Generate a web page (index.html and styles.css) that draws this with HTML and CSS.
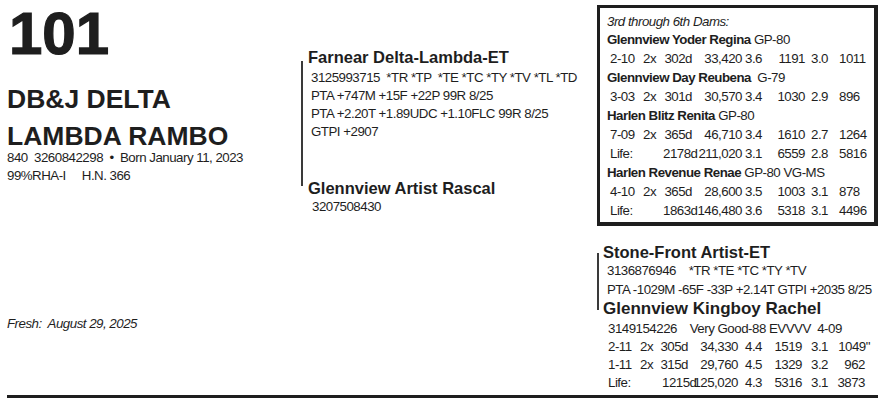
FILE: index.html
```html
<!DOCTYPE html>
<html>
<head>
<meta charset="utf-8">
<link rel="stylesheet" href="styles.css">
</head>
<body>
<div class="sheet">
  <section class="animal">
    <div class="lot">101</div>
    <h1 class="name">DB&amp;J DELTA<br>LAMBDA RAMBO</h1>
    <p class="meta">840  3260842298  •  Born January 11, 2023</p>
    <p class="meta">99%RHA-I     H.N. 366</p>
    <p class="fresh">Fresh:  August 29, 2025</p>
  </section>

  <section class="parents">
    <div class="pair pair-parents">
      <h2 class="hd">Farnear Delta-Lambda-ET</h2>
      <div class="data data-sire">
        <p>3125993715  *TR *TP  *TE *TC *TY *TV *TL *TD</p>
        <p>PTA +747M +15F +22P 99R 8/25</p>
        <p>PTA +2.20T +1.89UDC +1.10FLC 99R 8/25</p>
        <p>GTPI +2907</p>
      </div>
      <h2 class="hd hd-dam">Glennview Artist Rascal</h2>
      <div class="data data-dam">
        <p>3207508430</p>
      </div>
    </div>
  </section>

  <section class="ancestry">
    <div class="dams">
      <p class="dams-title">3rd through 6th Dams:</p>
      <p class="dam"><b>Glennview Yoder Regina</b> GP-80</p>
      <div class="rec rec-box"><span>2-10</span><span>2x</span><span>302d</span><span>33,420</span><span>3.6</span><span>1191</span><span>3.0</span><span>1011</span></div>
      <p class="dam"><b>Glennview Day Reubena</b>  G-79</p>
      <div class="rec rec-box"><span>3-03</span><span>2x</span><span>301d</span><span>30,570</span><span>3.4</span><span>1030</span><span>2.9</span><span>896</span></div>
      <p class="dam"><b>Harlen Blitz Renita</b> GP-80</p>
      <div class="rec rec-box"><span>7-09</span><span>2x</span><span>365d</span><span>46,710</span><span>3.4</span><span>1610</span><span>2.7</span><span>1264</span></div>
      <div class="rec rec-box"><span class="life">Life:</span><span>2178d</span><span>211,020</span><span>3.1</span><span>6559</span><span>2.8</span><span>5816</span></div>
      <p class="dam"><b>Harlen Revenue Renae</b> GP-80 VG-MS</p>
      <div class="rec rec-box"><span>4-10</span><span>2x</span><span>365d</span><span>28,600</span><span>3.5</span><span>1003</span><span>3.1</span><span>878</span></div>
      <div class="rec rec-box"><span class="life">Life:</span><span>1863d</span><span>146,480</span><span>3.6</span><span>5318</span><span>3.1</span><span>4496</span></div>
    </div>

    <div class="pair pair-grand">
      <h2 class="hd">Stone-Front Artist-ET</h2>
      <div class="data data-gsire">
        <p>3136876946    *TR *TE *TC *TY *TV</p>
        <p>PTA -1029M -65F -33P +2.14T GTPI +2035 8/25</p>
      </div>
      <h2 class="hd hd-gdam">Glennview Kingboy Rachel</h2>
      <div class="data data-gdam">
        <p>3149154226    Very Good-88 EVVVV  4-09</p>
        <div class="rec rec-low"><span>2-11</span><span>2x</span><span>305d</span><span>34,330</span><span>4.4</span><span>1519</span><span>3.1</span><span>1049<i class="hang">"</i></span></div>
        <div class="rec rec-low"><span>1-11</span><span>2x</span><span>315d</span><span>29,760</span><span>4.5</span><span>1329</span><span>3.2</span><span>962</span></div>
        <div class="rec rec-low"><span class="life">Life:</span><span>1215d</span><span>125,020</span><span>4.3</span><span>5316</span><span>3.1</span><span>3873</span></div>
      </div>
    </div>
  </section>
</div>
<div class="rule"></div>
</body>
</html>
```
FILE: styles.css
```css
* { box-sizing: border-box; }
html, body { margin: 0; padding: 0; background: #fff; }
body {
  color: #1e1e1e;
  font-family: "Liberation Sans", Arial, sans-serif;
  font-size: 13.3px;
  letter-spacing: -0.5px;
}
p, h1, h2 { margin: 0; }

.sheet {
  display: grid;
  grid-template-columns: 294px 296px 281px;
  height: 395px;
  padding-left: 7px;
}

/* left column */
.animal { padding-top: 0; }
.lot {
  font-weight: 700;
  font-size: 60px;
  line-height: 67px;
  letter-spacing: 0;
  margin-left: 2px;
  -webkit-text-stroke: 1.2px #1e1e1e;
}
.name {
  font-weight: 700;
  font-size: 26.5px;
  letter-spacing: 0;
  line-height: 37px;
  margin-top: 14px;
  margin-bottom: -6px;
}
.meta { line-height: 18px; white-space: pre; }
.fresh {
  font-style: italic;
  line-height: 18px;
  margin-top: 130px;
  white-space: pre;
}

/* pedigree connectors */
.pair { position: relative; }
.pair::before {
  content: "";
  position: absolute;
  left: 0;
  width: 2px;
  background: #3a3a3a;
}
.hd {
  font-weight: 700;
  font-size: 16.5px;
  letter-spacing: 0;
  line-height: 18px;
}
.data p { white-space: pre; }

/* parents */
.parents { padding-top: 48px; }
.pair-parents { padding-left: 7px; }
.pair-parents::before { top: 13px; height: 125px; }
.data-sire { padding-left: 3px; margin-top: 2.5px; line-height: 18px; }
.hd-dam { margin-top: 38px; }
.data-dam { padding-left: 4px; margin-top: 1.5px; line-height: 18px; }

/* third through sixth dams */
.ancestry { padding-top: 5px; }
.dams {
  border: 3px solid #1e1e1e;
  border-right-width: 4px;
  border-bottom-width: 4px;
  padding: 4.5px 0 1.5px 7px;
  line-height: 18.9px;
}
.dams-title { font-style: italic; }
.dam { white-space: pre; }
.dam b { font-weight: 700; letter-spacing: -0.5px; }

.rec { display: grid; }
.rec span { white-space: nowrap; text-align: right; }
.rec span:nth-child(1), .rec span:nth-child(2) { text-align: left; }
.rec .life { grid-column: span 2; text-align: left; }

.rec-box { grid-template-columns: 33px 20px 32px 50px 20px 43px 23px 42px; }
.rec-box span:nth-child(1) { padding-left: 3px; }
.rec-box span:nth-child(2) { padding-left: 3px; }
.rec-box span:last-child { text-align: left; padding-left: 11px; }
.rec-box .life { padding-left: 3px; }

/* grand parents */
.pair-grand { margin-top: 17px; padding-left: 6px; }
.pair-grand::before { top: 10px; height: 57px; }
.data-gsire { padding-left: 4px; margin-top: 1.5px; line-height: 18.3px; }
.hd-gdam { font-size: 17px; margin-top: 0.5px; }
.data-gdam { margin-top: 2.5px; line-height: 18px; }
.data-gdam > p { padding-left: 5px; }
.rec-low { grid-template-columns: 35px 22px 28px 50px 24px 40px 26px 37px; }
.rec-low span:nth-child(1) { padding-left: 5px; }
.rec-low span:nth-child(2) { padding-left: 2px; }
.rec-low .life { padding-left: 5px; }
.hang { font-style: normal; margin-right: -5px; }

.rule {
  margin-left: 7px;
  width: 871px;
  height: 3px;
  background: #1e1e1e;
}
```
